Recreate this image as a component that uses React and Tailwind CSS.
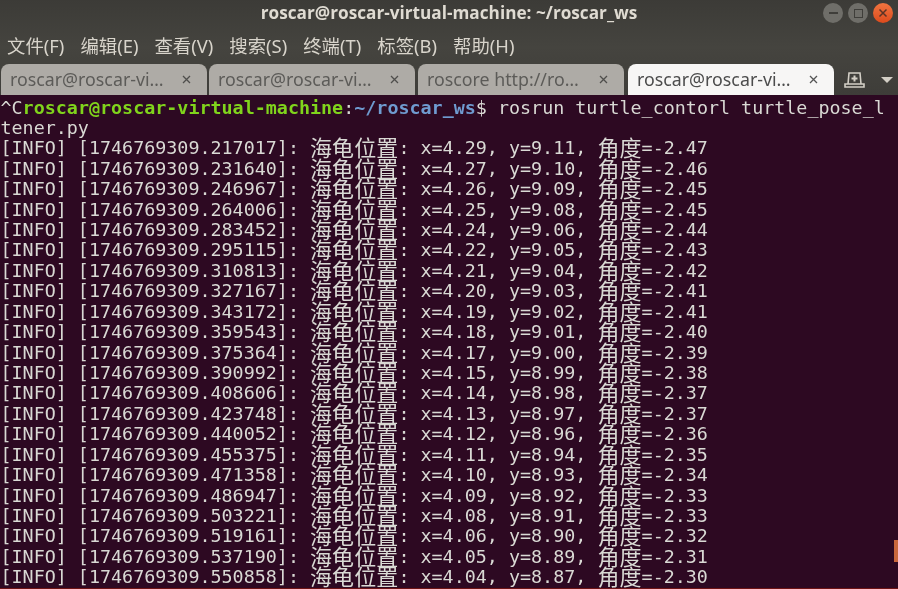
import { Fragment } from 'react'

const cjk = '"Noto Sans CJK SC", sans-serif'

const menus = ['文件(F)', '编辑(E)', '查看(V)', '搜索(S)', '终端(T)', '标签(B)', '帮助(H)']

const tabs = [
  { id: 1, label: 'roscar@roscar-vi…', space: 'ml-[1px]' },
  { id: 2, label: 'roscar@roscar-vi…', space: 'ml-[2px]' },
  { id: 3, label: 'roscore http://ro…', space: 'ml-[3px]' },
  { id: 4, label: 'roscar@roscar-vi…', space: 'ml-[4px]', active: true },
]

const logs = [
  ['217017', '4.29', '9.11', '-2.47'],
  ['231640', '4.27', '9.10', '-2.46'],
  ['246967', '4.26', '9.09', '-2.45'],
  ['264006', '4.25', '9.08', '-2.45'],
  ['283452', '4.24', '9.06', '-2.44'],
  ['295115', '4.22', '9.05', '-2.43'],
  ['310813', '4.21', '9.04', '-2.42'],
  ['327167', '4.20', '9.03', '-2.41'],
  ['343172', '4.19', '9.02', '-2.41'],
  ['359543', '4.18', '9.01', '-2.40'],
  ['375364', '4.17', '9.00', '-2.39'],
  ['390992', '4.15', '8.99', '-2.38'],
  ['408606', '4.14', '8.98', '-2.37'],
  ['423748', '4.13', '8.97', '-2.37'],
  ['440052', '4.12', '8.96', '-2.36'],
  ['455375', '4.11', '8.94', '-2.35'],
  ['471358', '4.10', '8.93', '-2.34'],
  ['486947', '4.09', '8.92', '-2.33'],
  ['503221', '4.08', '8.91', '-2.33'],
  ['519161', '4.06', '8.90', '-2.32'],
  ['537190', '4.05', '8.89', '-2.31'],
  ['550858', '4.04', '8.87', '-2.30'],
]

function Han({ children }) {
  return (
    <span
      className="inline-block h-[20px] align-top text-[22px] leading-[17px] tracking-[0.1px]"
      style={{ fontFamily: cjk }}
    >
      {children}
    </span>
  )
}

function LogLine({ row }) {
  const [stamp, x, y, angle] = row
  return (
    <div className="h-[20.43px] whitespace-pre">
      {`[INFO] [1746769309.${stamp}]: `}
      <Han>海龟位置</Han>
      {`: x=${x}, y=${y}, `}
      <Han>角度</Han>
      {`=${angle}`}
    </div>
  )
}

export default function App() {
  return (
    <div className="flex h-[589px] w-[898px] flex-col overflow-hidden bg-[#2d0922] blur-[0.4px]">
      {/* title + menu + tabs */}
      <div className="h-[95px] shrink-0 bg-gradient-to-b from-[#3c3b37] via-[#45443f] to-[#3e3d39]">
        <div className="relative flex h-[26px] items-center justify-center">
          <span
            className="text-[17.2px] font-bold leading-none text-[#dfdbd2]"
            style={{ fontFamily: '"Open Sans", sans-serif' }}
          >
            roscar@roscar-virtual-machine: ~/roscar_ws
          </span>
          <div className="absolute right-[5px] top-[3px] flex items-center gap-[5px]">
            <div className="flex h-[20px] w-[20px] items-center justify-center rounded-full bg-[#6f6e69]">
              <div className="h-[1.5px] w-[9px] bg-[#3f3e3a]" />
            </div>
            <div className="flex h-[20px] w-[20px] items-center justify-center rounded-full bg-[#6f6e69]">
              <div className="h-[9px] w-[9px] border border-[#3f3e3a]" />
            </div>
            <div className="flex h-[20px] w-[20px] items-center justify-center rounded-full bg-gradient-to-b from-[#f0743f] to-[#dc4a1c]">
              <svg width="10" height="10" viewBox="0 0 10 10" fill="none" stroke="#5a3326" strokeWidth="1.5">
                <path d="M1.5 1.5l7 7M8.5 1.5l-7 7" />
              </svg>
            </div>
          </div>
        </div>

        <div
          className="flex h-[38px] items-center gap-[16px] pl-[7px] pt-[3px] text-[18.4px] leading-none text-[#d8d4cb]"
          style={{ fontFamily: '"Noto Sans", "Noto Sans CJK SC", sans-serif' }}
        >
          {menus.map((m) => (
            <span key={m}>{m}</span>
          ))}
        </div>

        <div className="flex h-[31px] items-end">
          {tabs.map((t) => (
            <div
              key={t.id}
              className={`flex h-[31px] w-[206px] shrink-0 items-center justify-between rounded-t-[8px] pl-[9px] pr-[16px] text-[17.8px] leading-none ${t.space} ${
                t.active ? 'bg-[#f7f6f5] text-[#4c4c4c]' : 'bg-[#aeaba6] text-[#5c5b58]'
              }`}
              style={{ fontFamily: '"Noto Sans", sans-serif' }}
            >
              <span className="whitespace-nowrap">{t.label}</span>
              <svg width="9" height="9" viewBox="0 0 9 9" fill="none" stroke={t.active ? '#555' : '#4f4e4c'} strokeWidth="1.3">
                <path d="M1 1l7 7M8 1l-7 7" />
              </svg>
            </div>
          ))}
          <div className="ml-[10px] flex h-[31px] shrink-0 items-center gap-[16px]">
            <svg width="21" height="16" viewBox="0 0 21 16" fill="none" stroke="#d3cfc6" strokeWidth="1.6">
              <path d="M4 12L5 1h11l1 11M1 15v-3h19v3z" />
              <path d="M10.5 3.5v6M7.5 6.5h6" strokeWidth="2" />
            </svg>
            <div className="h-0 w-0 border-x-[6.5px] border-t-[6px] border-x-transparent border-t-[#d3cfc6]" />
          </div>
        </div>
      </div>

      {/* terminal */}
      <div
        className="relative flex-1 overflow-hidden border-b border-[#6e1416] pl-[0.5px] pt-[2.5px] text-[18.37px] leading-[20.43px] text-[#d9d9d4]"
        style={{ fontFamily: '"DejaVu Sans Mono", monospace' }}
      >
        <div className="h-[20.43px] whitespace-pre">
          ^C<span className="font-bold text-[#80d41c]">roscar@roscar-virtual-machine</span>:
          <span className="font-bold text-[#6f9bd0]">~/roscar_ws</span>$ rosrun turtle_contorl turtle_pose_l
        </div>
        <div className="h-[20.43px]">tener.py</div>
        {logs.map((row) => (
          <Fragment key={row[0]}>
            <LogLine row={row} />
          </Fragment>
        ))}
        <div className="absolute right-0 top-[445px] h-[22px] w-[4px] bg-[#c9673c]" />
      </div>
    </div>
  )
}
